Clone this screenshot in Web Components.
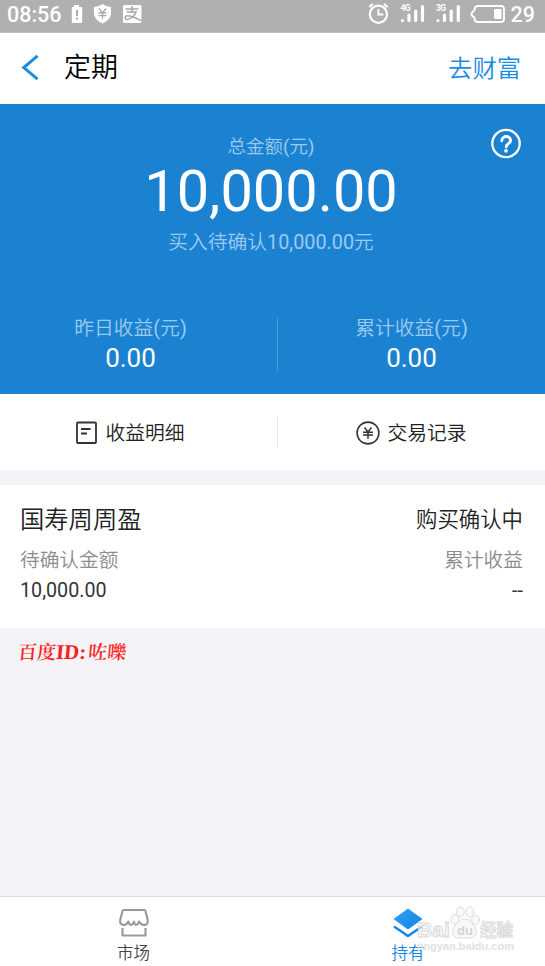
<!DOCTYPE html>
<html lang="zh-CN">
<head>
<meta charset="utf-8">
<title>定期</title>
<style>
html,body{margin:0;height:100%;overflow:hidden}
body{font-family:Roboto,"Noto Sans CJK SC DemiLight","Noto Sans CJK SC Light","Noto Sans CJK SC",sans-serif;font-weight:400;background:#f3f3f8}
</style>
</head>
<body>
<deposit-page></deposit-page>
<script>
const define = (name, css, html) => customElements.define(name, class extends HTMLElement {
  connectedCallback() {
    if (this.shadowRoot) return;
    const fill = html.replace(/\{(\w+)\}/g, (_, k) => this.getAttribute(k) || '');
    this.attachShadow({mode: 'open'}).innerHTML =
      `<style>*{box-sizing:border-box}svg{display:block;flex:none}.k{font-weight:300}i{font-style:normal;font-weight:400}${css}</style>${fill}`;
  }
});

define('status-bar', `
:host{display:flex;height:33px;background:#b0b0b0;border-bottom:1px solid #bfbfbf;color:#fff;padding:0 10px 0 7px;align-items:flex-start}
.t{font-size:21.500px;font-weight:500;line-height:29px;white-space:nowrap}
.time{width:54px}
.sp{flex:1}
`, `
<span class="t time">08:56</span>
<svg width="85" height="32" viewBox="61 0 85 32">
  <path fill="#fff" d="M74 5h5v2h2.200q1 0 1 1v14q0 1-1 1h-8.400q-1 0-1-1V8q0-1 1-1H74z"/>
  <path stroke="#aaa" stroke-width="2" d="M77 10v6M77 17.500v2"/>
  <path fill="#fff" d="M102.500 4q4 3 8.500 3v6c0 5-3.500 8-8.500 10.500C97.500 21 94 18 94 13V7q4.500 0 8.500-3z"/>
  <path fill="none" stroke="#aaa" stroke-width="1.300" d="M99 8.500l3.500 4.500 3.500-4.500M98.500 13h8M98.500 15.700h8M102.500 13v6"/>
  <rect x="123" y="5" width="18.500" height="18" rx="1.500" fill="#fff"/>
  <path fill="none" stroke="#a6a6a6" stroke-width="1.500" d="M125.500 9h13M132 6v6M126.500 12h9.500c-1 4-6 7.500-9 7.500-3 0-2.500-4 1-3.700 4 .2 8 2.500 13.500 5"/>
</svg>
<span class="sp"></span>
<svg width="144" height="32" viewBox="367 0 144 32" fill="none" stroke="#fff">
  <circle cx="378.400" cy="14.200" r="8.600" stroke-width="2.200"/>
  <path stroke-width="1.800" d="M378.400 9v5.500h5"/>
  <path stroke-width="2.200" stroke-linecap="round" d="M369.900 6.500l2.300-2M386.900 6.500l-2.300-2"/>
  <g stroke-width="3.200" stroke-linecap="round">
  <path d="M402.500 20.500v.1M409 15v5.500M415.700 11v9.500M422.500 6.500v14"/>
  <path d="M438 20.500v.1M444.500 15v5.500M451.200 11v9.500M458.300 6.500v14"/></g>
  <g fill="#fff" stroke="none" font-family="Roboto" font-size="8.500" font-weight="700"><text x="400.500" y="10.500" textLength="10">4G</text><text x="436" y="10.500" textLength="10">3G</text></g>
  <path stroke-width="1.900" stroke-linejoin="round" d="M478 6h23q3 0 3 3v10q0 3-3 3h-23q-3 0-3.500-3v-1.500q-3-1.500-3-3.500t3-3.500V9q.5-3 3.500-3z"/>
  <rect x="494" y="9" width="7.500" height="10" rx="1" fill="#fff" stroke="none"/>
</svg>
<span class="t">29</span>`);

define('nav-header', `
:host{display:flex;height:71px;background:#fff;padding:0 24px 0 20px;align-items:center}
.title{font-size:27px;line-height:40px;margin:0 0 2px 24px;color:#000}
.link{margin-left:auto;font-size:24.300px;line-height:36px;color:#1a8be6}
`, `
<svg width="20" height="30" viewBox="20 53 20 30"><path d="M37.500 54.800L23.800 66.600l13.700 11.600" fill="none" stroke="#1a8be6" stroke-width="3"/></svg>
<span class="title k"><slot></slot></span><span class="link k">{action}</span>`);

define('stat-item', `
:host{display:flex;flex-direction:column;align-items:center;flex:1;padding-top:2px}
.l{font-size:19.800px;line-height:28px;color:#9bcaef}.v{font-size:26px;line-height:30px;color:#fff}
`, `<span class="l k">{label}<i>(</i>元<i>)</i></span><span class="v"><slot></slot></span>`);

define('amount-hero', `
:host{display:flex;flex-direction:column;height:290px;background:#1b82d2;position:relative}
.sum{display:flex;flex-direction:column;align-items:center;color:#9bcaef;padding:30px 3px 0 0;white-space:nowrap}
.a{font-size:18.500px;line-height:27px}.b{font-size:57.700px;line-height:60px;color:#fff}.c{font-size:19.800px;line-height:30px;padding-top:7px}
.stats{display:flex;margin-top:55px;height:62px}
.left{width:277px;padding-right:16px;display:flex}
.right{flex:1;display:flex}
.div{width:1px;height:53px;margin-top:5px;background:#4b9bdb}
.help{position:absolute;left:490px;top:23px}
`, `
<div class="sum"><span class="a k">总金额<i>(</i>元<i>)</i></span><span class="b">10,000.00</span><span class="c k">买入待确认<i>10,000.00</i>元</span></div>
<div class="stats"><div class="left"><stat-item label="昨日收益">0.00</stat-item></div><div class="div"></div><div class="right"><stat-item label="累计收益">0.00</stat-item></div></div>
<svg class="help" width="32" height="32" viewBox="0 0 32 32" fill="none" stroke="#fff"><circle cx="16" cy="16.500" r="13.700" stroke-width="2.300"/><path stroke-width="2.900" stroke-linecap="round" d="M11.800 13.700c.3-5.700 8.800-5.400 8.800-.2 0 3.200-4.400 3.200-4.400 6.500"/><circle cx="16" cy="23.800" r="1.900" fill="#fff" stroke="none"/></svg>`);

define('action-item', `
:host{display:flex;flex:1;align-items:center;justify-content:center;color:#222;padding-top:2px}
.x{font-size:19.800px;line-height:30px;margin-left:7px;padding-top:2px}
`, `<slot name="icon"></slot><span class="x k"><slot></slot></span>`);

define('action-row', `
:host{display:flex;height:76px;background:#fff;align-items:center}
.left{width:277px;padding-right:16px;display:flex}.right{flex:1;display:flex}
.div{width:1px;height:32px;background:#e7e7ea}
`, `
<div class="left"><action-item><svg slot="icon" width="22" height="24" viewBox="0 0 22 24" fill="none" stroke="#333" stroke-width="1.800"><rect x="1" y="1.500" width="19" height="20.500" rx="1"/><path d="M5 8h9.500M5 12.500h6"/></svg>收益明细</action-item></div>
<div class="div"></div>
<div class="right"><action-item><svg slot="icon" width="24" height="24" viewBox="0 0 24 24" fill="none" stroke="#333"><circle cx="12" cy="12" r="10.900" stroke-width="1.600"/><path stroke-width="1.500" d="M8.500 6.500l3.500 4.500 3.500-4.500M7 11.200h10M7 14h10M12 11v6.800"/></svg>交易记录</action-item></div>`);

define('holding-card', `
:host{display:flex;flex-direction:column;height:143px;background:#fff;margin-top:15px;padding:14px 22px 0 20px;color:#222}
.r{display:flex;justify-content:space-between;align-items:center}
.n{height:37px;font-size:24.300px}.n b{font-weight:inherit;font-size:21.400px}
.m{height:44px;font-size:19.700px;color:#8c8c8c}
.v{height:21px;font-size:19.700px;color:#333}
`, `
<div class="r n k"><span>国寿周周盈</span><b>购买确认中</b></div>
<div class="r m k"><span>待确认金额</span><span>累计收益</span></div>
<div class="r v"><span>10,000.00</span><span>--</span></div>`);

define('author-note', `
:host{display:flex;flex:1;align-items:flex-start;padding:11px 0 0 18px;color:#ff2020;font:600 19px/26px "Liberation Serif","Noto Serif CJK SC","Noto Sans CJK SC",serif}
span{display:block;white-space:nowrap;transform:skewX(-5deg)}
b{font-size:21px;font-weight:700;margin-right:2px}
`, `<span>百度<b>ID:</b>咗嚛</span>`);

define('tab-item', `
:host{display:flex;flex-direction:column;align-items:center;color:#444;font-size:16.500px;line-height:24px;padding-top:9px}
:host([active]){color:#0f85e4}
.k{padding-top:2px}
`, `<slot name="icon"></slot><span class="k"><slot></slot></span>`);

define('tab-bar', `
:host{display:flex;height:70px;border-top:1px solid #dadadd;background:#fff;position:relative}
tab-item{flex:none;width:267px}tab-item[active]{width:282px}
.wm{position:absolute;left:412px;top:5px}
`, `
<tab-item><svg slot="icon" width="32" height="34" viewBox="118 906 32 34" fill="none" stroke="#999" stroke-width="2.100" stroke-linejoin="round"><path d="M123.500 910h21q.8 0 1 1l2.200 9c1 5.500-5.500 7-8.700 1.500-1.500 4.500-4.500 4.500-5 0-1.500 4.500-4.500 4.500-5.500 0-3 5.500-9.300 4-8.300-1.500l2.300-9q.2-1 1-1z"/><path d="M122.500 928v7.500h23V928"/></svg>市场</tab-item>
<tab-item active><svg slot="icon" width="32" height="34" viewBox="392 906 32 34"><defs><linearGradient id="g" x2="1" y2="1"><stop stop-color="#389ff0"/><stop offset="1" stop-color="#0b85e8"/></linearGradient></defs><path fill="url(#g)" d="M408 908.500l14.500 10.500-14.500 10.500-14.500-10.500z"/><path fill="none" stroke="#168ae8" stroke-width="2.600" d="M394 926.500l14 9.500 14-9.500"/></svg>持有</tab-item>
<svg class="wm" width="110" height="56" viewBox="412 902 110 56" fill="#f7f7f7" stroke="#d8d8d8" stroke-width=".9" fill-opacity=".7">
  <g font-family="'Liberation Sans'" font-weight="700"><text x="417" y="937" font-size="21" textLength="33" lengthAdjust="spacingAndGlyphs">Bai</text>
  <text x="480" y="936" font-size="17.500" font-family="'Noto Sans CJK SC'" textLength="33" lengthAdjust="spacingAndGlyphs">经验</text></g>
  <ellipse cx="455" cy="919.500" rx="3.800" ry="5"/><ellipse cx="460.500" cy="912" rx="3.800" ry="5"/><ellipse cx="470" cy="912" rx="3.800" ry="5"/><ellipse cx="475.500" cy="920" rx="3.800" ry="5"/>
  <path d="M465 919c5 0 6 4 9 7 4 4 2.500 12-3 12h-13c-5.500 0-7-8-3-12 3-3 5-7 10-7z"/>
  <text x="457" y="935" font-family="'Liberation Sans'" font-size="13" font-weight="700" fill="#d4d4d4" stroke="none" fill-opacity="1">du</text>
  <text x="417" y="950" font-family="'Liberation Sans'" font-size="10.500" font-weight="700" fill="#e2e2e2" stroke="none" fill-opacity="1" textLength="97" lengthAdjust="spacingAndGlyphs">jingyan.baidu.com</text>
</svg>`);

define('deposit-page', `
:host{display:flex;flex-direction:column;height:966px;width:545px}
status-bar,nav-header,amount-hero,action-row,holding-card,tab-bar{flex-shrink:0}
`, `
<status-bar></status-bar>
<nav-header action="去财富">定期</nav-header>
<amount-hero></amount-hero>
<action-row></action-row>
<holding-card></holding-card>
<author-note></author-note>
<tab-bar></tab-bar>`);
</script>
</body>
</html>
